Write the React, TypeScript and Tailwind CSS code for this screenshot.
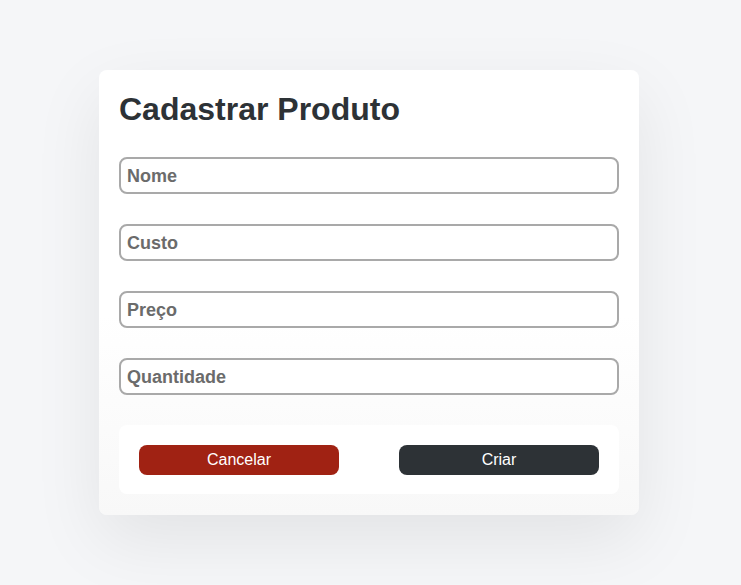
const fields = ["Nome", "Custo", "Preço", "Quantidade"];

export default function App() {
  return (
    <div className="flex min-h-[585px] w-full items-start justify-center bg-[#f5f6f8] pt-[70px] pr-[3px] font-['Liberation_Sans',Arial,sans-serif]">
      <div className="w-[540px] rounded-lg bg-[linear-gradient(to_bottom,#ffffff_55%,#f8f8f8)] px-5 pt-[21px] pb-[21px] shadow-[0_25px_70px_rgba(0,0,0,0.08)]">
        <h1 className="text-[32px] font-bold leading-[36px] text-[#2d3236]">
          Cadastrar Produto
        </h1>
        <form className="mt-[30px] flex flex-col gap-[30px]">
          {fields.map((f) => (
            <input
              key={f}
              placeholder={f}
              className="h-[37px] w-full rounded-lg border-2 border-[#a9a9a9] bg-white px-[6px] pt-px text-[18px] font-bold text-[#555] outline-none placeholder:text-[#6b6b6b]"
            />
          ))}
        </form>
        <div className="mt-[30px] flex h-[69px] items-center justify-between rounded-lg bg-white px-5">
          <button className="h-[30px] w-[200px] rounded-lg bg-[#a02213] text-base text-white">
            Cancelar
          </button>
          <button className="h-[30px] w-[200px] rounded-lg bg-[#2d3236] text-base text-white">
            Criar
          </button>
        </div>
      </div>
    </div>
  );
}
